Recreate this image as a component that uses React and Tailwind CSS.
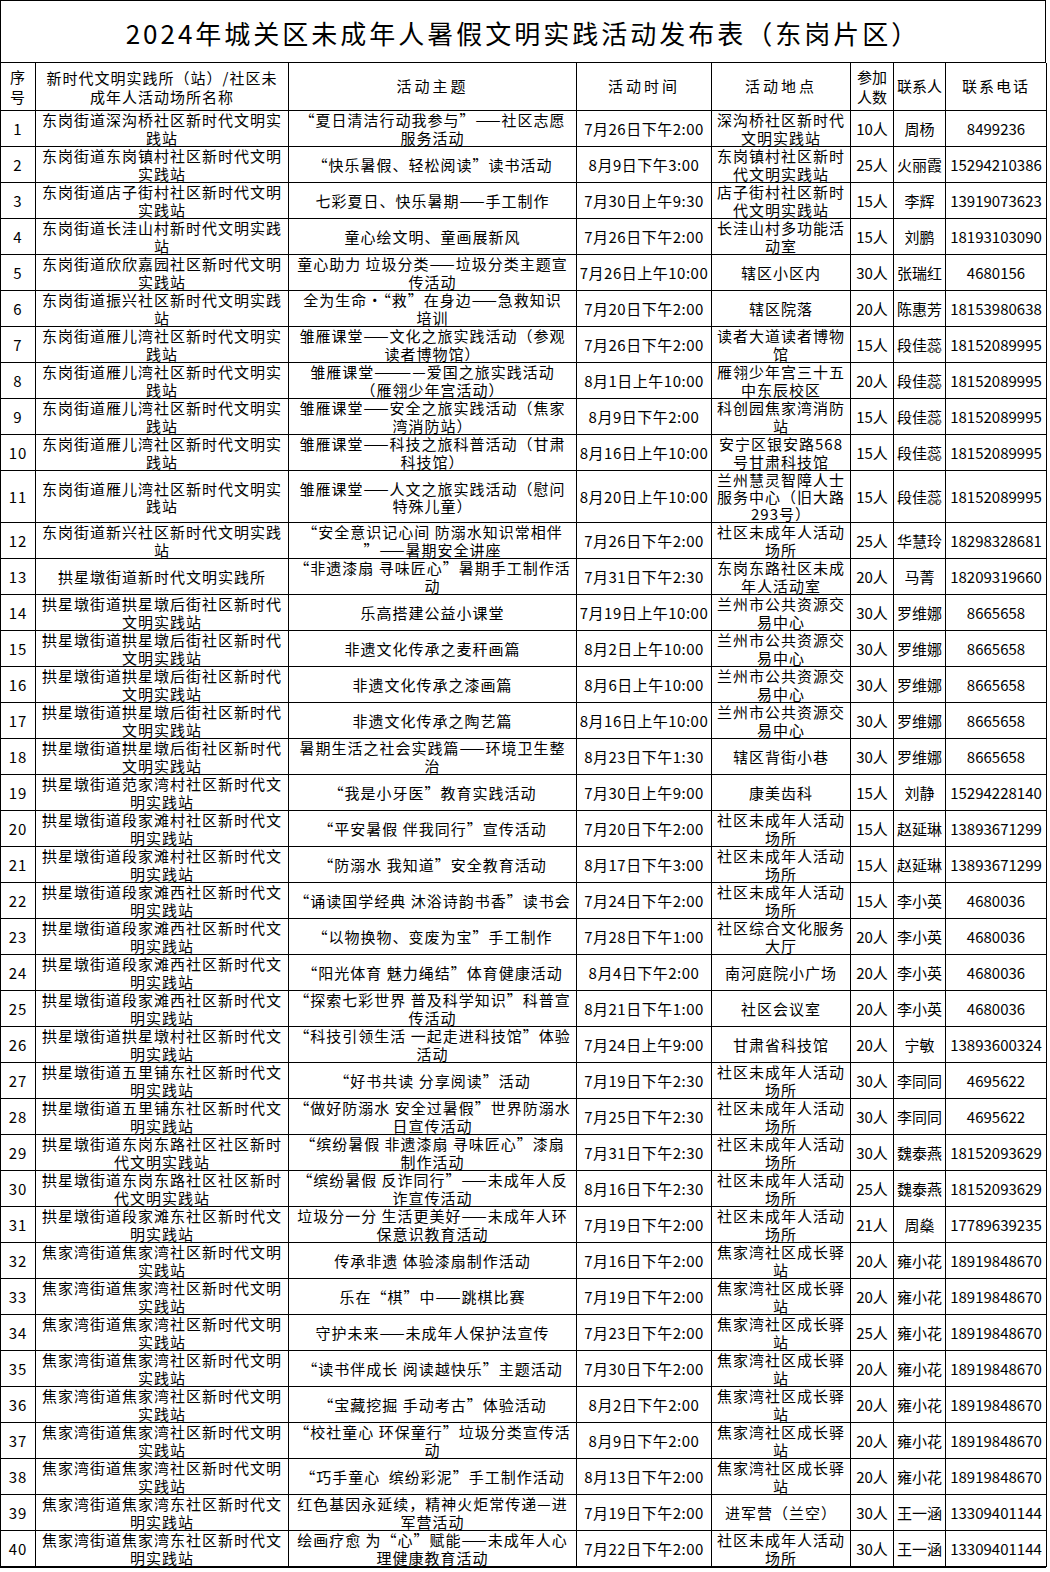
const COLS = "grid grid-cols-[35px_253px_288px_135px_139px_43px_52px_101px]";

const same7 = "东岗街道雁儿湾社区新时代文明实\n践站";
const gxh = "拱星墩街道拱星墩后街社区新时代\n文明实践站";
const djtx = "拱星墩街道段家滩西社区新时代文\n明实践站";
const wlp = "拱星墩街道五里铺东社区新时代文\n明实践站";
const dgdl = "拱星墩街道东岗东路社区社区新时\n代文明实践站";
const jjw = "焦家湾街道焦家湾社区新时代文明\n实践站";
const jjwd = "焦家湾街道焦家湾东社区新时代文\n明实践站";
const sq = "社区未成年人活动\n场所";
const lz = "兰州市公共资源交\n易中心";
const czy = "焦家湾社区成长驿\n站";

const rows = [
  ["东岗街道深沟桥社区新时代文明实\n践站", "“夏日清洁行动我参与”——社区志愿\n服务活动", "7月26日下午2:00", "深沟桥社区新时代\n文明实践站", "10人", "周杨", "8499236"],
  ["东岗街道东岗镇村社区新时代文明\n实践站", "“快乐暑假、轻松阅读”读书活动", "8月9日下午3:00", "东岗镇村社区新时\n代文明实践站", "25人", "火丽霞", "15294210386"],
  ["东岗街道店子街村社区新时代文明\n实践站", "七彩夏日、快乐暑期——手工制作", "7月30日上午9:30", "店子街村社区新时\n代文明实践站", "15人", "李辉", "13919073623"],
  ["东岗街道长洼山村新时代文明实践\n站", "童心绘文明、童画展新风", "7月26日下午2:00", "长洼山村多功能活\n动室", "15人", "刘鹏", "18193103090"],
  ["东岗街道欣欣嘉园社区新时代文明\n实践站", "童心助力 垃圾分类——垃圾分类主题宣\n传活动", "7月26日上午10:00", "辖区小区内", "30人", "张瑞红", "4680156"],
  ["东岗街道振兴社区新时代文明实践\n站", "全为生命·“救”在身边——急救知识\n培训", "7月20日下午2:00", "辖区院落", "20人", "陈惠芳", "18153980638"],
  [same7, "雏雁课堂——文化之旅实践活动（参观\n读者博物馆）", "7月26日下午2:00", "读者大道读者博物\n馆", "15人", "段佳蕊", "18152089995"],
  [same7, "雏雁课堂————爱国之旅实践活动\n（雁翎少年宫活动）", "8月1日上午10:00", "雁翎少年宫三十五\n中东辰校区", "20人", "段佳蕊", "18152089995"],
  [same7, "雏雁课堂——安全之旅实践活动（焦家\n湾消防站）", "8月9日下午2:00", "科创园焦家湾消防\n站", "15人", "段佳蕊", "18152089995"],
  [same7, "雏雁课堂——科技之旅科普活动（甘肃\n科技馆）", "8月16日上午10:00", "安宁区银安路568\n号甘肃科技馆", "15人", "段佳蕊", "18152089995"],
  [same7, "雏雁课堂——人文之旅实践活动（慰问\n特殊儿童）", "8月20日上午10:00", "兰州慧灵智障人士\n服务中心（旧大路\n293号）", "15人", "段佳蕊", "18152089995", true],
  ["东岗街道新兴社区新时代文明实践\n站", "“安全意识记心间 防溺水知识常相伴\n”——暑期安全讲座", "7月26日下午2:00", sq, "25人", "华慧玲", "18298328681"],
  ["拱星墩街道新时代文明实践所", "“非遗漆扇 寻味匠心”暑期手工制作活\n动", "7月31日下午2:30", "东岗东路社区未成\n年人活动室", "20人", "马菁", "18209319660"],
  [gxh, "乐高搭建公益小课堂", "7月19日上午10:00", lz, "30人", "罗维娜", "8665658"],
  [gxh, "非遗文化传承之麦秆画篇", "8月2日上午10:00", lz, "30人", "罗维娜", "8665658"],
  [gxh, "非遗文化传承之漆画篇", "8月6日上午10:00", lz, "30人", "罗维娜", "8665658"],
  [gxh, "非遗文化传承之陶艺篇", "8月16日上午10:00", lz, "30人", "罗维娜", "8665658"],
  [gxh, "暑期生活之社会实践篇——环境卫生整\n治", "8月23日下午1:30", "辖区背街小巷", "30人", "罗维娜", "8665658"],
  ["拱星墩街道范家湾村社区新时代文\n明实践站", "“我是小牙医”教育实践活动", "7月30日上午9:00", "康美齿科", "15人", "刘静", "15294228140"],
  ["拱星墩街道段家滩村社区新时代文\n明实践站", "“平安暑假 伴我同行”宣传活动", "7月20日下午2:00", sq, "15人", "赵延琳", "13893671299"],
  ["拱星墩街道段家滩村社区新时代文\n明实践站", "“防溺水 我知道”安全教育活动", "8月17日下午3:00", sq, "15人", "赵延琳", "13893671299"],
  [djtx, "“诵读国学经典 沐浴诗韵书香”读书会", "7月24日下午2:00", sq, "15人", "李小英", "4680036"],
  [djtx, "“以物换物、变废为宝”手工制作", "7月28日下午1:00", "社区综合文化服务\n大厅", "20人", "李小英", "4680036"],
  [djtx, "“阳光体育 魅力绳结”体育健康活动", "8月4日下午2:00", "南河庭院小广场", "20人", "李小英", "4680036"],
  [djtx, "“探索七彩世界 普及科学知识”科普宣\n传活动", "8月21日下午1:00", "社区会议室", "20人", "李小英", "4680036"],
  ["拱星墩街道拱星墩村社区新时代文\n明实践站", "“科技引领生活 一起走进科技馆”体验\n活动", "7月24日上午9:00", "甘肃省科技馆", "20人", "宁敏", "13893600324"],
  [wlp, "“好书共读 分享阅读”活动", "7月19日下午2:30", sq, "30人", "李同同", "4695622"],
  [wlp, "“做好防溺水 安全过暑假”世界防溺水\n日宣传活动", "7月25日下午2:30", sq, "30人", "李同同", "4695622"],
  [dgdl, "“缤纷暑假 非遗漆扇 寻味匠心”漆扇\n制作活动", "7月31日下午2:30", sq, "30人", "魏泰燕", "18152093629"],
  [dgdl, "“缤纷暑假 反诈同行”——未成年人反\n诈宣传活动", "8月16日下午2:30", sq, "25人", "魏泰燕", "18152093629"],
  ["拱星墩街道段家滩东社区新时代文\n明实践站", "垃圾分一分 生活更美好——未成年人环\n保意识教育活动", "7月19日下午2:00", sq, "21人", "周燊", "17789639235"],
  [jjw, "传承非遗 体验漆扇制作活动", "7月16日下午2:00", czy, "20人", "雍小花", "18919848670"],
  [jjw, "乐在“棋”中——跳棋比赛", "7月19日下午2:00", czy, "20人", "雍小花", "18919848670"],
  [jjw, "守护未来——未成年人保护法宣传", "7月23日下午2:00", czy, "25人", "雍小花", "18919848670"],
  [jjw, "“读书伴成长 阅读越快乐”主题活动", "7月30日下午2:00", czy, "20人", "雍小花", "18919848670"],
  [jjw, "“宝藏挖掘 手动考古”体验活动", "8月2日下午2:00", czy, "20人", "雍小花", "18919848670"],
  [jjw, "“校社童心 环保童行”垃圾分类宣传活\n动", "8月9日下午2:00", czy, "20人", "雍小花", "18919848670"],
  [jjw, "“巧手童心  缤纷彩泥”手工制作活动", "8月13日下午2:00", czy, "20人", "雍小花", "18919848670"],
  [jjwd, "红色基因永延续，精神火炬常传递—进\n军营活动", "7月19日下午2:00", "进军营（兰空）", "30人", "王一涵", "13309401144"],
  [jjwd, "绘画疗愈 为“心”赋能——未成年人心\n理健康教育活动", "7月22日下午2:00", sq, "30人", "王一涵", "13309401144"],
];

function Cell({ children, className = "" }) {
  return (
    <div
      className={`flex items-center justify-center text-center border-r border-b border-black px-[2px] whitespace-pre ${className}`}
    >
      {children}
    </div>
  );
}

export default function App() {
  return (
    <div className="w-[1050px] bg-white text-black text-[15px] tracking-[1px] font-['Noto_Sans_CJK_SC',sans-serif]">
      <div className="w-[1046px]">
        {/* Title */}
        <div className="h-[62px] pt-[2px] border border-b-0 border-black flex items-center justify-center text-[26px] tracking-[3px]">
          2024年城关区未成年人暑假文明实践活动发布表（东岗片区）
        </div>

        <div className="border-l border-t border-black">
          {/* Header */}
          <div className={COLS}>
            <Cell className="h-[48px] leading-[20px]">{"序\n号"}</Cell>
            <Cell className="h-[48px] leading-[19px]">{"新时代文明实践所（站）/社区未\n成年人活动场所名称"}</Cell>
            <Cell className="h-[48px] tracking-[3px]">活动主题</Cell>
            <Cell className="h-[48px] tracking-[3px]">活动时间</Cell>
            <Cell className="h-[48px] tracking-[3px]">活动地点</Cell>
            <Cell className="h-[48px] leading-[20px] tracking-[0px]">{"参加\n人数"}</Cell>
            <Cell className="h-[48px] tracking-[0px]">联系人</Cell>
            <Cell className="h-[48px] tracking-[2px]">联系电话</Cell>
          </div>

          {/* Rows */}
          {rows.map((r, i) => {
            const h = r[7] ? "h-[52px] leading-[17px]" : "h-[36px] leading-[18px]";
            return (
              <div key={i} className={COLS}>
                <Cell className={h}>{i + 1}</Cell>
                <Cell className={h}>{r[0]}</Cell>
                <Cell className={h}>{r[1]}</Cell>
                <Cell className={`${h} tracking-[0.5px]`}>{r[2]}</Cell>
                <Cell className={h}>{r[3]}</Cell>
                <Cell className={`${h} tracking-[0px]`}>{r[4]}</Cell>
                <Cell className={`${h} tracking-[0px]`}>{r[5]}</Cell>
                <Cell className={`${h} tracking-[0px]`}>{r[6]}</Cell>
              </div>
            );
          })}
        </div>
        <div className="h-[1px] bg-black" />
      </div>
    </div>
  );
}
